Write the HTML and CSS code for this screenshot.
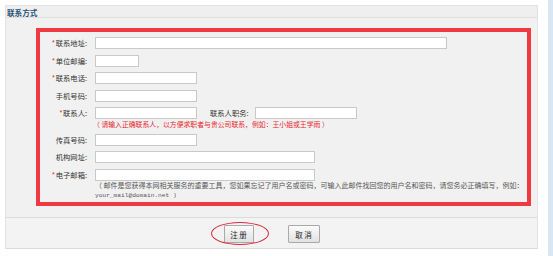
FILE: index.html
```html
<!DOCTYPE html>
<html lang="zh-CN">
<head>
<meta charset="utf-8">
<title>联系方式</title>
<link rel="stylesheet" href="styles.css">
</head>
<body>
<div class="page">
  <div class="panel">
    <div class="panel-head">联系方式</div>
    <div class="panel-body">
      <div class="redbox">
        <div class="form">
          <div class="lbl"><span class="req">*</span>联系地址:</div>
          <div class="val"><span class="inp w352"></span></div>

          <div class="lbl"><span class="req">*</span>单位邮编:</div>
          <div class="val"><span class="inp w44"></span></div>

          <div class="lbl"><span class="req">*</span>联系电话:</div>
          <div class="val"><span class="inp w102"></span></div>

          <div class="lbl">手机号码:</div>
          <div class="val"><span class="inp w102"></span></div>

          <div class="lbl lbl-top"><span class="req">*</span>联系人:</div>
          <div class="val val-col">
            <div class="line">
              <span class="inp w102"></span>
              <span class="sub-lbl">联系人职务:</span>
              <span class="inp w102"></span>
            </div>
            <div class="hint-red">（ 请输入正确联系人，以方便求职者与贵公司联系，例如：王小姐或王学雨 ）</div>
          </div>

          <div class="lbl">传真号码:</div>
          <div class="val"><span class="inp w102"></span></div>

          <div class="lbl">机构网址:</div>
          <div class="val"><span class="inp w220"></span></div>

          <div class="lbl lbl-top"><span class="req">*</span>电子邮箱:</div>
          <div class="val val-col">
            <div class="line"><span class="inp w220"></span></div>
            <div class="hint-grey">（ 邮件是您获得本网相关服务的重要工具，您如果忘记了用户名或密码，可输入此邮件找回您的用户名和密码，请您务必正确填写，例如：<br><span class="mono">your_mail@domain.net )</span></div>
          </div>
        </div>
      </div>
    </div>
    <div class="panel-foot">
      <div class="btn-wrap">
        <button class="btn btn-reg" type="button">注 册</button>
        <span class="ring"></span>
      </div>
      <button class="btn btn-cancel" type="button">取 消</button>
    </div>
  </div>
  <div class="side"></div>
</div>
</body>
</html>
```
FILE: styles.css
```css
html, body {
  margin: 0;
  padding: 0;
  background: #ffffff;
}
body {
  width: 553px;
  height: 256px;
  overflow: hidden;
  font-family: "Noto Sans CJK SC", "Liberation Sans", sans-serif;
  color: #333333;
}
.page {
  display: flex;
  align-items: flex-start;
  height: 256px;
}
.panel {
  width: 531px;
  margin-left: 5px;
  margin-top: 5px;
  background: #f1f1f1;
  border: 1px solid #e3e3e3;
  border-bottom: none;
}
.panel-head {
  height: 11px;
  line-height: 13px;
  padding-left: 1px;
  font-size: 7.6px;
  font-weight: bold;
  color: #1f5478;
  border-bottom: 1px solid #e0e0e0;
  background: #efefef;
}
.panel-body {
  padding: 10px 6px 11px 30px;
}
.redbox {
  border: 4px solid #ee3a40;
  padding: 5px 0 1px 0;
  height: 164px;
  box-sizing: content-box;
}
.form {
  display: grid;
  grid-template-columns: 47px 1fr;
  column-gap: 8px;
  row-gap: 5.5px;
  align-items: center;
}
.lbl {
  text-align: right;
  font-size: 7.3px;
  line-height: 12px;
  height: 12px;
  white-space: nowrap;
  color: #333;
}
.lbl-top {
  align-self: start;
}
.req {
  color: #e8242c;
  margin-right: 0.5px;
}
.val {
  display: flex;
  align-items: center;
  height: 12px;
}
.val-col {
  display: block;
  height: auto;
}
.line {
  display: flex;
  align-items: center;
  height: 12px;
}
.inp {
  display: block;
  height: 10px;
  background: #ffffff;
  border: 1px solid #c9c9c9;
  box-sizing: content-box;
}
.w352 { width: 350px; }
.w44 { width: 42px; }
.w102 { width: 100px; }
.w220 { width: 218px; }
.sub-lbl {
  font-size: 7.3px;
  margin-left: 13px;
  margin-right: 6px;
  white-space: nowrap;
  color: #333;
}
.hint-red {
  margin-top: 1px;
  margin-left: -2px;
  font-size: 6.85px;
  line-height: 8px;
  height: 8px;
  color: #e8242c;
  white-space: nowrap;
}
.hint-grey {
  margin-top: 0;
  font-size: 7px;
  line-height: 9.5px;
  color: #555555;
  white-space: nowrap;
}
.mono {
  font-family: "Liberation Mono", monospace;
  font-size: 6.2px;
}
.panel-foot {
  height: 32px;
  border-top: 1px solid #dcdcdc;
  border-bottom: 1px solid #dcdcdc;
  background: #f3f3f3;
  display: flex;
  justify-content: center;
  align-items: center;
  gap: 34px;
  padding-top: 2px;
  box-sizing: border-box;
}
.btn-wrap {
  position: relative;
  display: flex;
}
.btn {
  margin: 0;
  padding: 0;
  height: 18px;
  font-family: "Noto Sans CJK SC", "Liberation Sans", sans-serif;
  font-size: 7.5px;
  color: #222;
  background: linear-gradient(#fbfbfb, #e2e2e2);
  border: 1px solid #a9a9a9;
  border-radius: 1px;
}
.btn-reg { width: 30px; }
.btn-cancel { width: 32px; }
.ring {
  position: absolute;
  left: -13px;
  top: -3px;
  width: 56px;
  height: 21px;
  border: 1.5px solid #d42a3c;
  border-radius: 50%;
  pointer-events: none;
}
.side {
  width: 5px;
  height: 256px;
  margin-left: 10px;
  background: #d7e8f3;
}
```
